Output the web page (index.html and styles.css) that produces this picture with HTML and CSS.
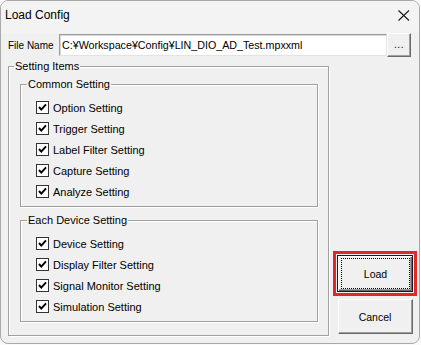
FILE: index.html
```html
<!DOCTYPE html>
<html lang="en">
<head>
<meta charset="UTF-8">
<title>Load Config</title>
<link rel="stylesheet" href="styles.css">
</head>
<body>
<div class="window">
    <div class="titlebar">
        <span class="title">Load Config</span>
        <svg class="close" width="12" height="11" viewBox="0 0 12 11">
            <path d="M0.5 0.5 L11 10.5 M11 0.5 L0.5 10.5" stroke="#1a1a1a" stroke-width="1.1" fill="none"/>
        </svg>
    </div>

    <div class="file-row">
        <label class="file-label">File Name</label>
        <div class="textbox">C:¥Workspace¥Config¥LIN_DIO_AD_Test.mpxxml</div>
        <button class="btn browse">...</button>
    </div>

    <div class="main">
        <fieldset class="group outer">
            <legend>Setting Items</legend>

            <fieldset class="group inner">
                <legend>Common Setting</legend>
                <div class="check-row"><span class="check"><svg width="11" height="11" viewBox="0 0 11 11"><path d="M2 5 L4.3 7.6 L9 2.4" stroke="#000" stroke-width="2" fill="none"/></svg></span>Option Setting</div>
                <div class="check-row"><span class="check"><svg width="11" height="11" viewBox="0 0 11 11"><path d="M2 5 L4.3 7.6 L9 2.4" stroke="#000" stroke-width="2" fill="none"/></svg></span>Trigger Setting</div>
                <div class="check-row"><span class="check"><svg width="11" height="11" viewBox="0 0 11 11"><path d="M2 5 L4.3 7.6 L9 2.4" stroke="#000" stroke-width="2" fill="none"/></svg></span>Label Filter Setting</div>
                <div class="check-row"><span class="check"><svg width="11" height="11" viewBox="0 0 11 11"><path d="M2 5 L4.3 7.6 L9 2.4" stroke="#000" stroke-width="2" fill="none"/></svg></span>Capture Setting</div>
                <div class="check-row"><span class="check"><svg width="11" height="11" viewBox="0 0 11 11"><path d="M2 5 L4.3 7.6 L9 2.4" stroke="#000" stroke-width="2" fill="none"/></svg></span>Analyze Setting</div>
            </fieldset>

            <fieldset class="group inner second">
                <legend>Each Device Setting</legend>
                <div class="check-row"><span class="check"><svg width="11" height="11" viewBox="0 0 11 11"><path d="M2 5 L4.3 7.6 L9 2.4" stroke="#000" stroke-width="2" fill="none"/></svg></span>Device Setting</div>
                <div class="check-row"><span class="check"><svg width="11" height="11" viewBox="0 0 11 11"><path d="M2 5 L4.3 7.6 L9 2.4" stroke="#000" stroke-width="2" fill="none"/></svg></span>Display Filter Setting</div>
                <div class="check-row"><span class="check"><svg width="11" height="11" viewBox="0 0 11 11"><path d="M2 5 L4.3 7.6 L9 2.4" stroke="#000" stroke-width="2" fill="none"/></svg></span>Signal Monitor Setting</div>
                <div class="check-row"><span class="check"><svg width="11" height="11" viewBox="0 0 11 11"><path d="M2 5 L4.3 7.6 L9 2.4" stroke="#000" stroke-width="2" fill="none"/></svg></span>Simulation Setting</div>
            </fieldset>
        </fieldset>

        <div class="buttons">
            <div class="highlight">
                <button class="btn btn-default"><span class="focus">Load</span></button>
            </div>
            <button class="btn cancel">Cancel</button>
        </div>
    </div>
</div>
</body>
</html>
```

FILE: styles.css
```css
body {
    margin: 0;
    padding: 0;
    background-color: #fafafa;
    font-family: 'Liberation Sans', Arial, sans-serif;
    color: #000;
}

.window {
    box-sizing: border-box;
    width: 420px;
    height: 344px;
    background-color: #f0f0f0;
    border: 1px solid #a9a9a9;
    border-radius: 8px;
    overflow: hidden;
}

.titlebar {
    height: 32px;
    display: flex;
    align-items: center;
    justify-content: space-between;
    padding: 0 9px 4px 4px;
    box-sizing: border-box;
    background-color: #f3f3f3;
}

.title {
    font-size: 12px;
}

.close {
    display: block;
}

.file-row {
    height: 24px;
    display: flex;
    align-items: center;
    padding-left: 7px;
}

.file-label {
    font-size: 10px;
    width: 51px;
}

.textbox {
    box-sizing: border-box;
    width: 328px;
    height: 22px;
    background-color: #fff;
    border: 1px solid;
    border-color: #9d9d9d #e3e3e3 #e3e3e3 #9d9d9d;
    box-shadow: inset 1px 1px 0 #d8d8d8;
    font-size: 10.7px;
    line-height: 20px;
    padding-left: 2px;
    white-space: nowrap;
}

.btn {
    box-sizing: border-box;
    background-color: #f0f0f0;
    border: 1px solid;
    border-color: #fff #696969 #696969 #fff;
    box-shadow: inset -1px -1px 0 #a0a0a0;
    font-family: 'Liberation Sans', Arial, sans-serif;
    font-size: 10.5px;
    color: #000;
    padding: 0;
    margin: 0;
}

.browse {
    width: 24px;
    height: 24px;
    font-size: 10px;
    line-height: 16px;
    letter-spacing: 0.5px;
}

.main {
    display: flex;
    align-items: flex-end;
    padding-left: 7px;
    margin-top: 2px;
}

.group {
    margin: 0;
    border: 1px solid #a0a0a0;
    box-shadow: inset 1px 1px 0 #fff, 1px 1px 0 #fff;
    min-inline-size: 0;
    box-sizing: border-box;
}

.group legend {
    font-size: 11px;
    line-height: 14px;
    padding: 0 1px;
}

.outer {
    width: 321px;
    height: 277px;
    padding: 4px 0 13px 11px;
}

.outer > legend {
    margin-left: -6px;
}

.inner {
    width: 298px;
    padding: 6px 0 4px 15px;
}

.inner > legend {
    margin-left: -9px;
}

.second {
    margin-top: 6px;
}

.check-row {
    height: 21px;
    display: flex;
    align-items: center;
    font-size: 11px;
}

.check {
    box-sizing: border-box;
    width: 13px;
    height: 13px;
    border: 1px solid #333;
    background-color: #fff;
    margin-right: 4px;
    display: flex;
    align-items: center;
    justify-content: center;
}

.check svg {
    display: block;
}

.buttons {
    width: 84px;
    margin-left: 4px;
    display: flex;
    flex-direction: column;
    align-items: center;
    gap: 3px;
    margin-bottom: 2px;
}

.highlight {
    border: 3px solid #e3262e;
    padding: 1px;
}

.btn-default {
    display: flex;
    width: 76px;
    height: 37px;
    padding: 2px 2px 2px 3px;
    border-color: #1a1a1a;
    box-shadow: inset 1px 1px 0 #fff, inset -1px -1px 0 #696969, inset -2px -2px 0 #a0a0a0;
}

.focus {
    flex: 1;
    display: flex;
    align-items: center;
    justify-content: center;
    border: 1px dotted #000;
}

.cancel {
    width: 75px;
    height: 35px;
}
```
